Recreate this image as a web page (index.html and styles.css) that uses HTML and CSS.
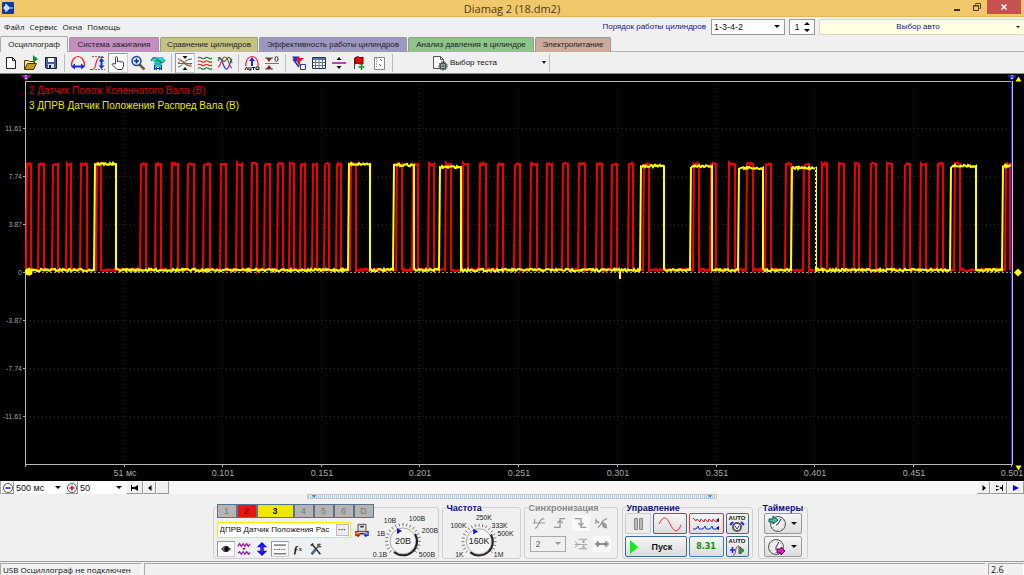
FILE: index.html
```html
<!DOCTYPE html>
<html lang="ru">
<head>
<meta charset="utf-8">
<title>Diamag 2 (18.dm2)</title>
<link rel="stylesheet" href="styles.css">
</head>
<body>
<div class="window">
  <header class="titlebar">
    <svg class="app-icon" viewBox="0 0 12 12"><rect width="12" height="12" rx="1" fill="#123a9c"/><path d="M1 6h2V4v4V5h1V2v8V3h1v6V4h1v4V5h1v2V6h4" fill="none" stroke="#cfe4ff"/></svg>
    <h1 class="title">Diamag 2 (18.dm2)</h1>
    <div class="window-buttons">
      <button class="win-btn" aria-label="Свернуть"><svg viewBox="0 0 10 10"><path d="M2 8h6" stroke="#333" stroke-width="2"/></svg></button>
      <button class="win-btn" aria-label="Восстановить"><svg viewBox="0 0 10 10"><path d="M3.500 2.500V1.500h5v5h-1M1.500 3.500h5v5h-5zM1.500 4h5" fill="none" stroke="#4a3c1c"/></svg></button>
      <button class="win-btn close" aria-label="Закрыть"><svg viewBox="0 0 10 10"><path d="M2.500 2.500l5 5M7.500 2.500l-5 5" stroke="#fff" stroke-width="1.500"/></svg></button>
    </div>
  </header>

  <div class="menubar">
    <nav class="menu">
      <button>Файл</button><button>Сервис</button><button>Окна</button><button>Помощь</button>
    </nav>
    <div class="order">
      <label for="order">Порядок работы цилиндров</label>
      <span class="drop order-drop"><select id="order"><option>1-3-4-2</option></select></span>
      <span class="spin"><input id="cyl" value="1" aria-label="Цилиндр"><svg viewBox="0 0 6 12"><path d="M0 4l3-3 3 3zM0 8l3 3 3-3z"/></svg></span>
      <button class="auto">Выбор авто</button>
    </div>
  </div>

  <nav class="tabs">
    <button class="tab active">Осциллограф</button>
    <button class="tab ignition">Система зажигания</button>
    <button class="tab compare">Сравнение цилиндров</button>
    <button class="tab efficiency">Эффективность работы цилиндров</button>
    <button class="tab pressure">Анализ давления в цилиндре</button>
    <button class="tab power">Электропитание</button>
  </nav>

  <div class="toolbar">
    <button class="tool" aria-label="Новый"><svg viewBox="0 0 16 16"><path d="M3.500 2.500h6l3 3v8h-9zM9.500 2.500v3h3" fill="#fff" stroke="#222"/></svg></button>
    <button class="tool" aria-label="Открыть"><svg viewBox="0 0 16 16"><path d="M1.500 14.500v-9h4l1 1h5v3" fill="#ffe98a" stroke="#4a3a00"/><path d="M1.500 14.500l3-6h9l-3 6z" fill="#c49a24" stroke="#4a3a00"/><path d="M10 0l5 4-5 4z" fill="#0a9a1a"/></svg></button>
    <button class="tool" aria-label="Сохранить"><svg viewBox="0 0 16 16"><path d="M2.500 2.500h11v11h-10l-1-1z" fill="#46638e" stroke="#15203a"/><path d="M5 3h6v4H5z" fill="#fff"/><path d="M5 9h6v4H5z" fill="#d5dbe6"/><path d="M6 10h2v3H6z" fill="#15203a"/></svg></button>
    <span class="sep"></span>
    <button class="tool" aria-label="Ширина"><svg viewBox="0 0 16 16" fill="none"><path d="M1.500 11C1 5 5 1.500 8 1.500S15 5 14.500 11" stroke="#f02020" stroke-width="1.200"/><path d="M1 11.500l4-3v2h6v-2l4 3-4 3v-2H5v2z" fill="#1030e0"/></svg></button>
    <button class="tool" aria-label="Амплитуда"><svg viewBox="0 0 16 16" fill="none"><path d="M0 14.500h2c6 0 2-12 8-12h4" stroke="#f02020" stroke-width="1.200"/><path d="M2 1.500h12M5 14.500h10" stroke="#a06060" stroke-dasharray="2 1"/><path d="M11.500 3l3 3.500h-2v4h2l-3 3.500-3-3.500h2v-4h-2z" fill="#1030e0"/></svg></button>
    <button class="tool pressed" aria-label="Рука"><svg viewBox="0 0 16 16"><path d="M5.500 9V2.500c0-1.200 2-1.200 2 0V7c0-1.200 2-1.200 2 0 0-1 2-1 2 .300 0-.800 2-.800 2 .700v3.500l-1.500 3H7L2.500 10c-1-1.500.800-2 1.500-1.200z" fill="#fff" stroke="#444"/></svg></button>
    <button class="tool" aria-label="Лупа"><svg viewBox="0 0 16 16"><path d="M9.500 9.500l5 5" stroke="#7a5a2a" stroke-width="2.500"/><circle cx="6.500" cy="6" r="4.500" fill="#c8ecff" stroke="#274a8a" stroke-width="1.500"/><path d="M4 6h5M6.500 3.500v5" stroke="#1828b0" stroke-width="1.500"/></svg></button>
    <button class="tool" aria-label="Сигнал"><svg viewBox="0 0 16 16"><path d="M3 2h10l2 3-3 2v5H4V7L1 5z" fill="#32d0d8"/><path d="M1 6c2-5 4-4 7-1s5 4 7 0" fill="none" stroke="#188060" stroke-width="1.200"/><path d="M5 6h6M5 9h6" stroke="#188060"/><path d="M4.500 10v5M11.500 10v5M5 13.500h6M7 12l-2 1.500L7 15M9 12l2 1.500L9 15" fill="none" stroke="#1030c0"/></svg></button>
    <span class="sep"></span>
    <button class="tool pressed" aria-label="Совместить"><svg viewBox="0 0 16 16" fill="none"><path d="M1 4c4 0 6 8 14 7" stroke="#158030"/><path d="M1 12c5 0 5-8 14-8" stroke="#158030"/><path d="M1 8c2-3 4-3 7 0s5 3 7 0M1 8.500h14" stroke="#e03030"/><path d="M5.500 1h5L8 4zM5.500 15h5L8 12z" fill="#111"/></svg></button>
    <button class="tool" aria-label="Разнести"><svg viewBox="0 0 16 16" fill="none" stroke-width="1.200"><path d="M1 3c3-3 4 3 7 0s4 3 7 0" stroke="#158030"/><path d="M1 6.500c3-3 4 3 7 0s4 3 7 0M1 10c3-3 4 3 7 0s4 3 7 0" stroke="#f02020"/><path d="M1 13.500c3-3 4 3 7 0s4 3 7 0" stroke="#158030"/></svg></button>
    <button class="tool" aria-label="Наложить"><svg viewBox="0 0 16 16" fill="none" stroke-width="1.200"><path d="M1 3c4-3 5 10 8 11s4-8 6-10" stroke="#2040e0"/><path d="M1 12C4 12 4 2 8 2s4 11 7 11" stroke="#f02020"/><path d="M1 6c2-7 5 4 8-1s5-2 6 3" stroke="#158030"/></svg></button>
    <span class="sep"></span>
    <button class="tool" aria-label="Авто"><svg viewBox="0 0 16 16"><path d="M2 11C1 5 5 1.500 8 1.500S15 5 14 11" fill="none" stroke="#f02020" stroke-width="1.200"/><path d="M8 2l3 4H9v5H7V6H5z" fill="#1030e0"/><path d="M1 15l1.500-3 1.500 3M5 12v3h2v-3M8 12.500h3M9.500 12v3M12 12h3v2.500h-3z" fill="none" stroke="#111"/></svg></button>
    <button class="tool" aria-label="Ноль"><svg viewBox="0 0 16 16"><path d="M1 8.500h14" stroke="#777"/><path d="M2 3h6L5 7zM2 14h6l-3-4z" fill="#a01818"/><path d="M1 3h8M1 14h8" stroke="#555"/><ellipse cx="12.500" cy="4" rx="1.500" ry="2.500" fill="none" stroke="#333"/></svg></button>
    <span class="sep"></span>
    <button class="tool" aria-label="Фильтр"><svg viewBox="0 0 16 16"><path d="M1 1.500h8L5 7z" fill="#1830d0"/><path d="M5 3h8l-4 4v4L7 9z" fill="#e01828"/><path d="M2 4l6 8" stroke="#1830d0" stroke-width="1.500"/><path d="M9.500 9.500h5v5h-5z" fill="#fff" stroke="#2040a0"/></svg></button>
    <button class="tool" aria-label="Таблица"><svg viewBox="0 0 16 16"><path d="M1.500 2.500h13v11h-13z" fill="#fff" stroke="#24365c"/><path d="M2 4h12" stroke="#5078b8" stroke-width="2"/><path d="M4.500 3v10M8 3v10M11.500 3v10M2 7.500h12M2 10.500h12" stroke="#66748e"/></svg></button>
    <button class="tool" aria-label="Разделить"><svg viewBox="0 0 16 16"><path d="M1 8h14" stroke="#a010a0" stroke-width="1.500"/><path d="M5.500 5L8 2l2.500 3zM5.500 11L8 14l2.500-3z" fill="#111"/></svg></button>
    <button class="tool" aria-label="Метка"><svg viewBox="0 0 16 16"><path d="M3.500 3v11" stroke="#444"/><path d="M4 3c3-3 5 1 8-1v7c-3 1-5-2-8 0z" fill="#e00808" stroke="#700"/><path d="M10.500 9v6M7.500 12h6" stroke="#0a9a1a" stroke-width="1.500"/></svg></button>
    <button class="tool" aria-label="Отчёт"><svg viewBox="0 0 16 16"><path d="M3.500 2.500h10v12h-10z" fill="#fff" stroke="#888"/><path d="M5 4h1M5 6.500h1M5 9h1M5 11.500h1M9 4l2 2M8 9l2 2" stroke="#777"/></svg></button>
    <span class="sep"></span>
    <button class="test-choice">
      <svg viewBox="0 0 16 16"><path d="M1.500 1.500h7l3 3v9h-10zM8.500 1.500v3h3" fill="#fff" stroke="#555"/><circle cx="11" cy="11" r="3" fill="#dfe8dc" stroke="#41504a" stroke-width="1.500"/><circle cx="11" cy="11" r="4.300" fill="none" stroke="#41504a" stroke-dasharray="1.500 1.500"/><path d="M8 11h6M11 8v6" stroke="#41504a"/></svg>
      <span>Выбор теста</span><i class="caret"></i>
    </button>
    <span class="sep"></span>
  </div>

  <main class="scope">
    <svg id="scope" class="plot" viewBox="0 74 1024 407" role="img" aria-label="Осциллограмма">
      <g id="grid" class="grid"></g>
      <path class="frame" d="M25.500 81V467M25 81.500H1013M25 464.500H1013"/>
      <path class="zero" d="M26 272.500H1012"/>
      <path class="cursor-b" d="M1011.500 81V465"/><path class="cursor-g" d="M1012.500 81V465"/>
      <path id="red" class="trace red"/><path id="yellow" class="trace yellow"/>
      <path d="M815.500 168V268" stroke="#222" stroke-dasharray="2 2"/>
      <g id="labels"></g>
      <path d="M21 75h10l-5 6z" fill="#9a10a8"/><path d="M1007 75h10l-5 6z" fill="#1818f0"/>
      <text class="mark" x="26" y="79">1</text><text class="mark" x="1012" y="79">2</text>
      <path d="M1015.500 81.500l3-5 3 5zM1015.500 465.500l3 5 3-5z" fill="#ff0"/>
      <path d="M1014 272.500l4-4 4 4-4 4z" fill="#ff0"/><circle cx="29" cy="272" r="3.500" fill="#ff0"/>
      <text class="legend" x="29" y="94" fill="#d80000">2 Датчик Полож Коленчатого Вала (В)</text>
      <text class="legend" x="29" y="109" fill="#e8e800">3 ДПРВ Датчик Положения Распред Вала (В)</text>
    </svg>
  </main>

  <div class="timebar">
    <button class="tb" aria-label="Уменьшить"><svg viewBox="0 0 12 12"><circle cx="6" cy="6" r="4.500" fill="#fff" stroke="#555"/><path d="M3.500 6h5" stroke="#1818c0" stroke-width="1.500"/></svg></button>
    <span class="drop time-drop"><select aria-label="Развёртка"><option>500 мс</option></select></span>
    <button class="tb" aria-label="Увеличить"><svg viewBox="0 0 12 12"><circle cx="6" cy="6" r="4.500" fill="#fff" stroke="#555"/><path d="M3.500 6h5M6 3.500v5" stroke="#d01010" stroke-width="1.500"/></svg></button>
    <span class="drop zoom-drop"><select aria-label="Масштаб"><option>50</option></select></span>
    <button class="tb wide" aria-label="В начало"><svg viewBox="0 0 12 12"><path d="M2 3h1v6H2zM9 3v6L4 6zM3 5h6v2H3z"/></svg></button>
    <button class="tb" aria-label="Назад"><svg viewBox="0 0 12 12"><path d="M7.500 3v6L4 6z"/></svg></button>
    <div class="track"><span class="thumb"></span></div>
    <button class="tb" aria-label="Вперёд"><svg viewBox="0 0 12 12"><path d="M4.500 3v6L8 6z"/></svg></button>
    <button class="tb wide" aria-label="В конец"><svg viewBox="0 0 12 12"><path d="M9 3h1v6H9zM3 3v6l5-3zM3 5h6v2H3z"/></svg></button>
    <button class="tb wide" aria-label="Пуск прокрутки"><svg viewBox="0 0 12 12"><path d="M3 3v6l6-3z" fill="#00f"/></svg></button>
  </div>

  <div class="splitter"><span class="grip"></span></div>

  <footer class="panel">
    <section class="group channel">
      <div class="channel-main">
        <div class="channels">
          <button class="ch">1</button><button class="ch ch-red">2</button><button class="ch ch-yellow">3</button><button class="ch">4</button><button class="ch">5</button><button class="ch">6</button><button class="ch">D</button>
        </div>
        <div class="sensor">
          <span class="sensor-box"><input value="ДПРВ Датчик Положения Рас" aria-label="Датчик"><button aria-label="Выбрать датчик">···</button></span>
          <button class="mini" aria-label="Подключение"><svg viewBox="0 0 16 16"><path d="M3.500 1.500h9v8h-9z" fill="#dfe8df" stroke="#333"/><path d="M6 4h4M5 12h6" stroke="#333" stroke-width="2"/><path d="M4 10H1v4h3M3 12l2 2-2 2" fill="none" stroke="#e01010" stroke-width="1.500"/><path d="M12 10h3v4h-3M13 12l-2 2 2 2" fill="none" stroke="#1838d0" stroke-width="1.500"/></svg></button>
        </div>
        <div class="channel-tools">
          <button class="mini pressed" aria-label="Показать"><svg viewBox="0 0 16 16"><path d="M3 8c3-4 7-4 10 0-3 4-7 4-10 0z" fill="#777" stroke="#111"/><circle cx="8.500" cy="8" r="2.500"/></svg></button>
          <button class="mini" aria-label="Фильтр"><svg viewBox="0 0 16 16" fill="none"><path d="M1 5l2-3 2 3 2-3 2 3 2-3 2 3 2-3" stroke="#a010a0" stroke-width="1.500"/><path d="M1 13l2-2 2 3 2-3 2 3 2-3 2 3 2-2" stroke="#a010a0" stroke-width="1.300"/><path d="M6 7h4L8 9z" fill="#111"/></svg></button>
          <button class="mini" aria-label="Инвертировать"><svg viewBox="0 0 16 16"><path d="M8 0l6 6h-4v4h4l-6 6-6-6h4V6H2z" fill="#1010f0"/><path d="M8 4v8" stroke="#b020d0"/></svg></button>
          <button class="mini pressed" aria-label="Линии"><svg viewBox="0 0 16 16"><path d="M1 3.500h14M1 13.500h14" stroke="#222"/><path d="M1 8.500h14" stroke="#222" stroke-dasharray="1 1"/></svg></button>
          <button class="mini fx">ƒ<small>x</small></button>
          <button class="mini" aria-label="Настройка"><svg viewBox="0 0 16 16"><path d="M3 14L13 2M10 2c0 3 2 4 4 3" fill="none" stroke="#555" stroke-width="1.800"/><path d="M3 2l10 12M2 4l3-2" stroke="#333" stroke-width="1.800"/><path d="M3 14l4-5" stroke="#3870b0" stroke-width="3"/></svg></button>
        </div>
      </div>
      <svg class="knob knob-v" viewBox="371 505 68 53">
        <g class="ticks" data-cx="403" data-cy="540"></g>
        <circle class="dial" cx="403" cy="540" r="13"/><path class="shade" d="M415 533A14 14 0 0 1 394 551"/>
        <path d="M397 527l5 3-5 3z" fill="#1010f0"/>
        <text x="403" y="543" class="value">20В</text>
        <text x="390" y="522">10В</text><text x="417" y="520">100В</text><text x="381" y="535">1В</text><text x="430" y="532">200В</text><text x="380" y="556">0.1В</text><text x="427" y="556">500В</text>
      </svg>
    </section>

    <fieldset class="group freq">
      <legend>Частота</legend>
      <svg class="knob knob-f" viewBox="444 511 78 47">
        <g class="ticks" data-cx="481" data-cy="540"></g>
        <circle class="dial" cx="481" cy="540" r="13"/><path class="shade" d="M493 533A14 14 0 0 1 472 551"/>
        <path d="M475 527l5 3-5 3z" fill="#1010f0"/>
        <text x="481" y="543" class="value">160K</text>
        <text x="486" y="518">250K</text><text x="460" y="526">100K</text><text x="502" y="526">333K</text><text x="508" y="535">500K</text><text x="461" y="556">1K</text><text x="501" y="556">1M</text>
      </svg>
    </fieldset>

    <fieldset class="group sync">
      <legend>Синхронизация</legend>
      <div class="sync-grid">
        <button class="mini" disabled aria-label="Фронт"><svg viewBox="0 0 16 16"><path d="M1 8h14M3 14C9 14 6 3 14 3M3 3v5" fill="none" stroke="#999" stroke-width="1.300"/></svg></button>
        <button class="mini" disabled aria-label="Подъём"><svg viewBox="0 0 16 16"><path d="M1 13h7V3h6M5 8l3-3 3 3" fill="none" stroke="#999" stroke-width="1.500"/></svg></button>
        <button class="mini lit" disabled aria-label="Спад"><svg viewBox="0 0 16 16"><path d="M1 3h7v10h6M5 8l3 3 3-3" fill="none" stroke="#999" stroke-width="1.500"/></svg></button>
        <button class="mini" disabled aria-label="Ручная"><svg viewBox="0 0 16 16"><path d="M1 3v6M1 5l4 3M3 13C8 12 6 4 14 3" fill="none" stroke="#999" stroke-width="1.500"/><path d="M8 6l5 3 1 5h-4L7 9z" fill="#999"/></svg></button>
        <span class="drop sync-drop"><select disabled aria-label="Канал синхронизации"><option>2</option></select></span>
        <button class="mini" disabled aria-label="Уровень"><svg viewBox="0 0 16 16"><path d="M5 2.500h10M1 8.500h14M5 13.500h10M1 5l4 3.500L1 12" fill="none" stroke="#999"/><path d="M9 4h4l-2 3zM9 12h4l-2-3z" fill="#999"/></svg></button>
        <button class="mini lit" disabled aria-label="Положение"><svg viewBox="0 0 16 16"><path d="M0 8h16" stroke="#888" stroke-width="2"/><path d="M2 4l5 4-5 4zM14 4L9 8l5 4z" fill="#888"/></svg></button>
      </div>
    </fieldset>

    <fieldset class="group control">
      <legend>Управление</legend>
      <div class="control-grid">
        <button class="big off" disabled aria-label="Пауза"><svg viewBox="0 0 16 16"><path d="M4.500 2.500h3v11h-3zM9.500 2.500h3v11h-3z" fill="#bbb" stroke="#888"/></svg></button>
        <button class="big sine" aria-label="Синус"><svg class="w24" viewBox="0 0 24 16"><path d="M1 8C6-2 9 2 12 8s7 11 11 1" fill="none" stroke="#f02828"/></svg></button>
        <button class="big redbox" aria-label="Сигналы"><svg class="w28" viewBox="0 0 28 16"><path d="M1 2l3 3 1-2 3 3 1-3 3 3 1-3 3 3 1-3 3 3 1-3 3 3 3-1" fill="none" stroke="#f02020"/><path d="M1 13h3l2-3 1 3h4l2-3 1 3h4l2-3 1 3h5" fill="none" stroke="#2030e0"/><path d="M27 2v4l-3-2zM27 10v4l-3-2z" fill="#114"/></svg></button>
        <button class="big auto-btn" aria-label="Авто диапазон"><small>AUTO</small><svg viewBox="0 0 16 12"><circle cx="8" cy="6" r="4" fill="#fff" stroke="#555" stroke-width="2"/><path d="M6 5l2 3 2-3" fill="none" stroke="#22c"/><path d="M1 4l3-3M15 4l-3-3" stroke="#13c" stroke-width="2"/></svg></button>
        <button class="big start"><svg viewBox="0 0 16 16"><path d="M4 1l8 7-8 7z" fill="#08f010"/></svg><span>Пуск</span></button>
        <button class="big number">8.31</button>
        <button class="big auto-btn" aria-label="Авто пуск"><small>AUTO</small><svg viewBox="0 0 16 12"><path d="M4 11c4 0 1-9 6-9v8" fill="none" stroke="#933"/><path d="M1 6h5M3.500 3v6" stroke="#1020e0" stroke-width="1.500"/><path d="M11 3v7l4-3.500z" fill="#0bbf20" stroke="#064"/></svg></button>
      </div>
    </fieldset>

    <fieldset class="group timers">
      <legend>Таймеры</legend>
      <div class="timer-col">
        <button class="big timer" aria-label="Таймер включения"><svg class="t18" viewBox="0 0 18 18"><circle cx="10" cy="9" r="7.500" fill="#eee" stroke="#555"/><path d="M10 9l3-5M10 9l-2 1" stroke="#333"/><circle cx="10" cy="9" r="6" fill="none" stroke="#888" stroke-dasharray="1 3.700"/><path d="M1 4h4V1l5 4-5 4V7H1z" fill="#3ac0a8" stroke="#155"/></svg><i class="caret"></i></button>
        <button class="big timer" aria-label="Таймер выключения"><svg class="t18" viewBox="0 0 18 18"><circle cx="8" cy="9" r="7.500" fill="#eee" stroke="#555"/><path d="M8 9l3-5M8 9v3" stroke="#333"/><circle cx="8" cy="9" r="6" fill="none" stroke="#888" stroke-dasharray="1 3.700"/><path d="M9 11h4V9l4 4-4 4v-2H9z" fill="#e020b0" stroke="#606"/></svg><i class="caret"></i></button>
      </div>
    </fieldset>
  </footer>

  <div class="status">
    <span class="cell first">USB Осциллограф не подключен</span><span class="cell middle"></span><span class="cell last">2.6</span>
  </div>
</div>
<script src="scope.js"></script>
</body>
</html>
```
FILE: styles.css
```css
* { box-sizing: border-box; }
body { margin: 0; background: #f0f0f0; font: 8px/12px "Liberation Sans", Arial, sans-serif; color: #111; }
button, input, select { font: inherit; color: inherit; margin: 0; padding: 0; border: 0; background: none; border-radius: 0; outline: 0; }
svg { display: block; flex: none; }
.window { display: flex; flex-direction: column; min-height: 100vh; border-bottom: 1px solid #cbb27a; }

.titlebar { display: grid; grid-template-columns: 1fr auto 1fr; align-items: start; height: 17px; background: #f0c869; border-bottom: 1px solid #e0b75a; }
.app-icon { width: 12px; height: 12px; margin: 2px 0 0 2px; }
.title { margin: 0; font: 11px/17px "Open Sans", "Noto Sans", sans-serif; color: #4b3c1d; }
.window-buttons { display: flex; justify-content: flex-end; padding-right: 3px; }
.win-btn { width: 20px; height: 14px; display: grid; place-items: center; }
.win-btn svg { width: 10px; height: 10px; }
.win-btn.close { width: 34px; background: #c75050; }

.menubar { display: flex; align-items: center; justify-content: space-between; height: 19px; }
.menu { display: flex; gap: 5px; padding-left: 4px; font-family: "Open Sans", "Noto Sans", sans-serif; }
.order { display: flex; align-items: center; gap: 4px; color: #15158c; }
.order label { margin-right: 1px; }
.drop { position: relative; display: inline-block; background: #fff; color: #111; }
.drop select { appearance: none; width: 100%; height: 100%; padding-left: 2px; font-size: 9px; }
.drop::after { content: ""; position: absolute; right: 4px; top: 50%; margin-top: -2px; border: 3px solid transparent; border-top-color: #111; border-bottom: 0; pointer-events: none; }
.order-drop { width: 74px; height: 16px; border: 1px solid #999; }
.spin { display: flex; align-items: center; width: 26px; height: 16px; border: 1px solid #999; background: #fff; color: #111; padding-right: 4px; }
.spin input { flex: 1; min-width: 0; text-align: center; font-size: 9px; }
.spin svg { width: 6px; height: 12px; }
.auto { position: relative; width: 205px; height: 16px; background: #ffffe1; border: 1px solid #d8d8c0; border-right: 0; border-radius: 2px; padding-right: 8px; }
.auto::after { content: ""; position: absolute; right: 4px; top: 6px; border: 2px solid transparent; border-top-color: #111; border-bottom: 0; }

.tabs { display: grid; grid-template-columns: 68px 90px 98px 148px 126px 76px; column-gap: 1px; height: 16px; border-bottom: 1px solid #b4b4b4; }
.tab { height: 15px; margin-top: 1px; border: 1px solid #999; border-bottom: 0; border-radius: 2px 2px 0 0; white-space: nowrap; color: #222; }
.tab.active { margin-top: 0; height: 16px; background: #f0f0f0; border-color: #aaa; }
.ignition { background: #c48fc0; }
.compare { background: #c5c283; }
.efficiency { background: #9c96c3; }
.pressure { background: #8dc588; }
.power { background: #ccab9b; }

.toolbar { display: flex; align-items: center; height: 22px; padding-left: 1px; border-bottom: 1px solid #888; }
.tool { width: 20px; height: 20px; display: grid; place-items: center; }
.tool svg, .test-choice svg { width: 16px; height: 16px; }
.pressed { background: #fafafa; border: 1px solid #ccc; border-top-color: #999; border-left-color: #999; }
.sep { width: 1px; height: 18px; margin: 0 3px; background: #bbb; }
.test-choice { display: flex; align-items: center; gap: 2px; width: 114px; margin-left: 36px; height: 20px; }
.caret { border: 2px solid transparent; border-top: 3px solid #111; border-bottom: 0; }
.test-choice .caret { margin-left: auto; }

.scope { background: #000; }
.plot { width: 100%; height: auto; font-family: "Liberation Sans", Arial, sans-serif; }
.grid path { stroke: #24240c; stroke-dasharray: 1 3; fill: none; }
.frame { stroke: #b8b8b8; fill: none; }
.zero { stroke: #999; stroke-dasharray: 2 2; }
.cursor-b { stroke: #2020e0; }
.cursor-g { stroke: #c8c8c8; }
.trace { fill: none; stroke-width: 2; }
.red { stroke: #f40000; }
.yellow { stroke: #ffff00; }
.y-label { font-size: 7px; fill: #a0a0a0; text-anchor: end; }
.x-label { font-size: 9px; fill: #a8a8a8; text-anchor: middle; }
.mark { font-size: 5px; fill: #fff; text-anchor: middle; }
.legend { font-size: 10px; }

.timebar { display: flex; height: 13px; background: #f7f7f7; border-left: 1px solid #aaa; }
.tb { width: 13px; display: grid; place-items: center; background: #f0f0f0; border: 1px solid #fff; border-right-color: #999; border-bottom-color: #999; }
.tb svg { width: 12px; height: 12px; }
.tb.wide { width: 17px; }
.time-drop { width: 51px; }
.zoom-drop { width: 48px; }
.track { flex: 1; display: flex; }
.thumb { width: 13px; background: #f0f0f0; border: 1px solid #fff; border-right-color: #999; border-bottom-color: #999; }

.splitter { height: 7px; display: flex; justify-content: center; }
.grip { position: relative; width: 410px; height: 5px; border: 1px solid #c8c8c8; background: repeating-linear-gradient(90deg, #a4ceec 0 1px, #eef4fa 1px 2px); }
.grip::before, .grip::after { content: ""; position: absolute; top: 0; border: 2px solid transparent; border-top: 3px solid #1c8cf0; border-bottom: 0; }
.grip::before { left: 4px; }
.grip::after { right: 4px; }

.panel { display: flex; justify-content: center; gap: 3px; padding: 2px 4px 2px 0; border-bottom: 1px solid #999; }
.group { position: relative; margin: 0; padding: 0; min-width: 0; height: 56px; border: 0; }
.group::before { content: ""; position: absolute; inset: 4px 0 0; border: 1px solid #d0d0d0; border-radius: 3px; pointer-events: none; }
.group > * { position: relative; }
.group legend { float: left; margin-left: 4px; padding: 0 1px; background: #f0f0f0; font: bold 9px/10px "Liberation Sans", Arial, sans-serif; color: #10107c; }
.group legend + * { clear: both; }
.channel { width: 226px; display: flex; }
.channel-main { width: 158px; padding: 1px 0 0 4px; display: flex; flex-direction: column; gap: 4px; }
.channels { display: flex; }
.ch { width: 20px; flex: none; height: 14px; border: 1px solid #58738e; background: #b4b4b4; color: #777; font-size: 9px; line-height: 12px; }
.ch-red { background: #e81414; color: #500; }
.ch-yellow { width: 37px; background: #eee800; color: #111; font-weight: bold; }
.sensor { display: flex; gap: 2px; }
.sensor-box { display: flex; flex: none; width: 134px; height: 16px; border: 1px solid #f4f000; background: #fff; }
.sensor-box input { flex: 1; min-width: 0; padding-left: 2px; font-size: 8px; }
.sensor-box button { width: 13px; margin: 1px; background: #eee; border: 1px solid #bbb; line-height: 8px; font-weight: bold; }
.mini { flex: none; width: 18px; height: 16px; display: grid; place-items: center; }
.mini svg { width: 14px; height: 14px; }
.channel-tools { display: flex; margin-top: -1px; }
.fx { display: flex; align-items: center; justify-content: center; font: italic bold 11px/14px "Liberation Serif", serif; }
.fx small { font-size: 7px; }
.knob { font-family: "Liberation Sans", Arial, sans-serif; font-size: 7px; text-anchor: middle; }
.knob text { fill: #222; }
.knob .value { font-size: 9px; }
.knob-v { width: 68px; height: 53px; margin-top: 3px; }
.knob-f { width: 78px; height: 46px; }
.dial { fill: #f4f4f4; stroke: #aaa; }
.shade { fill: none; stroke: #222; stroke-width: 2; }
.ticks path { stroke: #777; }
.freq { width: 79px; }
.sync { width: 94px; }
.sync legend { color: #888; }
.sync-grid { display: grid; grid-template-columns: repeat(4, 21px); gap: 5px 0; padding: 2px 0 0 6px; }
.sync-drop { grid-column: span 2; width: 36px; height: 16px; border: 1px solid #aaa; background: #f0f0f0; color: #666; }
.sync-drop::after { border-top-color: #999; }
.sync-drop select { padding-left: 5px; opacity: 1; }
.lit { background: #fafafa; }
.control { width: 131px; margin-left: 1px; }
.control-grid { display: grid; grid-template-columns: 26px 34px 35px 23px; grid-auto-rows: 21px; gap: 2px; padding: 0 3px; }
.big { display: flex; align-items: center; justify-content: center; border: 1px solid #999; border-radius: 2px; background: linear-gradient(#f6f6f6, #dcdcdc); }
.big svg { width: 16px; height: 16px; }
.big svg.w24 { width: 24px; }
.big svg.w28 { width: 28px; }
.big svg.t18 { width: 18px; height: 18px; }
.off { background: #ececec; border-color: #ccc; }
.sine { border-color: #3d6c94; }
.redbox { border-color: #f03030; }
.start { grid-column: span 2; justify-content: flex-start; gap: 10px; border-color: #3d6c94; font: bold 9px/12px "Liberation Sans", Arial, sans-serif; }
.number { color: #128a12; font: bold 9px/12px "DejaVu Sans", sans-serif; font-size: 8px; border-color: #3c7fc0; }
.auto-btn { flex-direction: column; border-color: #3d6c94; }
.auto-btn small { font: bold 6px/6px "Liberation Sans", Arial, sans-serif; }
.auto-btn svg { height: 12px; }
.timers { width: 50px; margin-left: 2px; }
.timer-col { display: grid; grid-auto-rows: 21px; gap: 2px; padding: 0 6px; }
.timer { gap: 5px; }
.timer .caret { border-width: 3px 3px 0; }

.status { display: flex; gap: 2px; height: 13px; margin-top: 1px; }
.cell { border: 1px solid #aaa; border-right-color: #fff; border-bottom-color: #fff; padding-left: 2px; line-height: 12px; white-space: nowrap; font-family: "Open Sans", "Noto Sans", sans-serif; }
.first { width: 142px; }
.middle { flex: 1; }
.last { width: 36px; font-size: 9px; }
```
FILE: scope.js
```js
const NS = "http://www.w3.org/2000/svg";
const add = (parent, tag, attrs, text) => {
  const el = document.createElementNS(NS, tag);
  for (const key in attrs) el.setAttribute(key, attrs[key]);
  if (text) el.textContent = text;
  parent.appendChild(el);
};

// Grid and axis labels
const grid = document.getElementById("grid");
const labels = document.getElementById("labels");
[[129, "11.61"], [177, "7.74"], [225, "3.87"], [273, "0"], [321, "-3.87"], [369, "-7.74"], [417, "-11.61"]].forEach(([y, t]) => {
  if (t !== "0") add(grid, "path", { d: `M26 ${y - 0.5}H1011` });
  add(labels, "path", { d: `M23 ${y - 0.5}h3`, stroke: "#aaa" });
  add(labels, "text", { class: "y-label", x: 22, y: y + 2 }, t);
});
[[125, "51 мс"], [223, "0.101"], [322, "0.151"], [420, "0.201"], [519, "0.251"], [618, "0.301"], [717, "0.351"], [815, "0.401"], [914, "0.451"], [1012, "0.501"]].forEach(([x, t]) => {
  add(grid, "path", { d: `M${x - 0.5} 84V464` });
  add(labels, "path", { d: `M${x - 0.5} 464v3`, stroke: "#aaa" });
  add(labels, "text", { class: "x-label", x, y: 476 }, t);
});

// Pulse trains: [rise, fall, top] with the top level optional
const redPulses = [[26,31],[38,44],[52,58],[66,71],[80,87],[96,101],[140,146],[155,161],[171,178],[187,194],[203,210],[220,226],[236,242],[251,257],[264,270],[277,283],[289,294],[300,305],[312,317],[324,329],[336,341],[350,356],[396,402],[412,418],[428,434],[445,451],[462,468],[479,486],[497,503],[514,520],[530,537],[546,552],[562,568],[578,585],[596,602],[611,617],[628,633],[643,649],[693,699],[710,716],[728,735],[746,753],[765,771],[785,791],[803,809],[821,827],[838,844],[854,859],[870,876],[886,892],[904,910],[920,926],[937,943],[954,960],[1005,1010]];
const yellowPulses = [[94,116,164],[348,370,164],[393,414,165],[439,461,167],[640,664,166],[690,712,166],[738,763,168],[791,816,168],[950,976,166],[1002,1011,166]];
const RIGHT = 1011;
let seed = 7;
const noise = () => { seed = (seed * 16807) % 2147483647; return (seed / 2147483647 - 0.5) * 2.4; };
const build = (pulses, base) => {
  let d = `M26 ${base}`, x = 26;
  for (const [rise, fall, top = 164] of pulses) {
    for (; x < rise; x++) d += `L${x} ${(base + noise()).toFixed(1)}`;
    d += `L${rise} ${base}L${rise + 1} ${top + 1}`;
    for (x = rise + 1; x < fall; x++) d += `L${x} ${(top + noise()).toFixed(1)}`;
    d += `L${fall} ${top}`;
    if (fall < RIGHT) d += `V${base}`;
  }
  for (; x < RIGHT; x++) if (pulses[pulses.length - 1][1] < RIGHT) d += `L${x} ${(base + noise()).toFixed(1)}`;
  return d;
};
document.getElementById("red").setAttribute("d", build(redPulses, 270));
document.getElementById("yellow").setAttribute("d", build(yellowPulses, 270) + "M620 270v9");

// Tick marks around the knobs
document.querySelectorAll(".ticks").forEach(g => {
  const cx = +g.dataset.cx, cy = +g.dataset.cy;
  for (let a = 140; a <= 400; a += 13) {
    const c = Math.cos(a * Math.PI / 180), s = Math.sin(a * Math.PI / 180);
    add(g, "path", { d: `M${cx + 15 * c} ${cy + 15 * s}L${cx + 18 * c} ${cy + 18 * s}` });
  }
});
```
